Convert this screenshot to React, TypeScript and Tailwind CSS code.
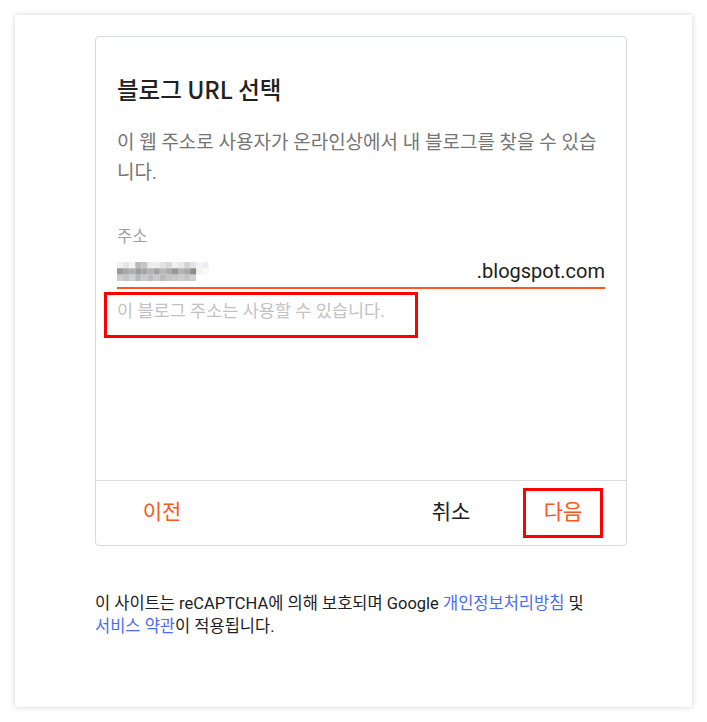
import React from "react";

const mosaic = [
  ["#f0f0f0", "#e6e6e6", "#f2f2f2", "#b8b8b8", "#c4c4c4", "#ececec", "#eeeeee", "#e2e2e2", "#d8d8d8", "#f0f0f0", "#e9e9e9", "#d4d4d0", "#e4e4e4", "#f4f4f4", "#e8eef4"],
  ["#9a9a9a", "#a8a8a8", "#b0b0b4", "#9c9c9c", "#a4a4a4", "#b4b4b8", "#a0a0a4", "#b8b8b8", "#acacac", "#989898", "#b4b4b4", "#a8a8a4", "#8c8c8c", "#f2f2f2", "#f8f8f8"],
  ["#cccccc", "#c4c4c4", "#d0d0d0", "#b4b8bc", "#c8c8c8", "#bcbcc0", "#c8c8c8", "#b8b8bc", "#c4c4c4", "#c8c8c8", "#cccccc", "#c4c4c4", "#d0d0d0", "#ffffff", "#ffffff"],
];

const Mosaic = () => (
  <svg width="92" height="19" viewBox="0 0 92 19">
    {mosaic.map((row, r) =>
      row.map((c, i) => (
        <rect key={`${r}-${i}`} x={i * 6.1} y={r * 6.3} width="6.2" height="6.4" fill={c} />
      ))
    )}
  </svg>
);

export default function App() {
  return (
    <div className="min-h-screen bg-white p-[15px] font-['Roboto','Noto_Sans_CJK_KR',sans-serif]">
      <div className="h-[692px] w-[677px] bg-white pl-[80px] pt-[21px] shadow-[0_0_6px_rgba(0,0,0,0.18)]">
        <div className="flex h-[510px] w-[532px] flex-col rounded-[4px] border border-[#d3dae0]">
          <div className="flex-1 px-[21px] pt-[37px]">
            <h1 className="text-[23.5px] font-medium leading-[30px] text-[#212121] font-['Noto_Sans_CJK_KR',sans-serif]">
              블로그 URL 선택
            </h1>
            <p className="mt-[24px] text-[19px] leading-[30px] text-[#757575]">
              이 웹 주소로 사용자가 온라인상에서 내 블로그를 찾을 수 있습니다.
            </p>
            <div className="mt-[39px] text-[16.5px] leading-[20px] text-[#9e9e9e]">주소</div>
            <div className="mt-[12px] flex items-center justify-between pb-[4px]">
              <Mosaic />
              <span className="text-[20px] leading-[24px] text-[#212121]">.blogspot.com</span>
            </div>
            <div className="h-[2px] bg-[#ff5722]" />
            <div className="-ml-[13px] mt-[3px] h-[46px] w-[314px] border-[3px] border-[#ff0000] pl-[10px] pt-[5px]">
              <span className="text-[17.5px] leading-[20px] text-[#c2c2c2]">이 블로그 주소는 사용할 수 있습니다.</span>
            </div>
          </div>
          <div className="flex h-[65px] items-center border-t border-[#dcdcdc] pr-[23px]">
            <button className="ml-[26px] w-[80px] text-[21px] text-[#ff5722]">이전</button>
            <div className="flex-1" />
            <button className="w-[80px] text-[21px] text-[#212121]">취소</button>
            <button className="ml-[32px] h-[50px] w-[80px] border-[3px] border-[#ff0000] text-[21px] text-[#ff5722]">
              다음
            </button>
          </div>
        </div>
        <p className="mt-[46px] w-[490px] text-[16.5px] leading-[23px] text-[#212121]">
          이 사이트는 reCAPTCHA에 의해 보호되며 Google{" "}
          <a className="text-[#4a6cf7]">개인정보처리방침</a> 및{" "}
          <a className="text-[#4a6cf7]">서비스 약관</a>이 적용됩니다.
        </p>
      </div>
    </div>
  );
}
